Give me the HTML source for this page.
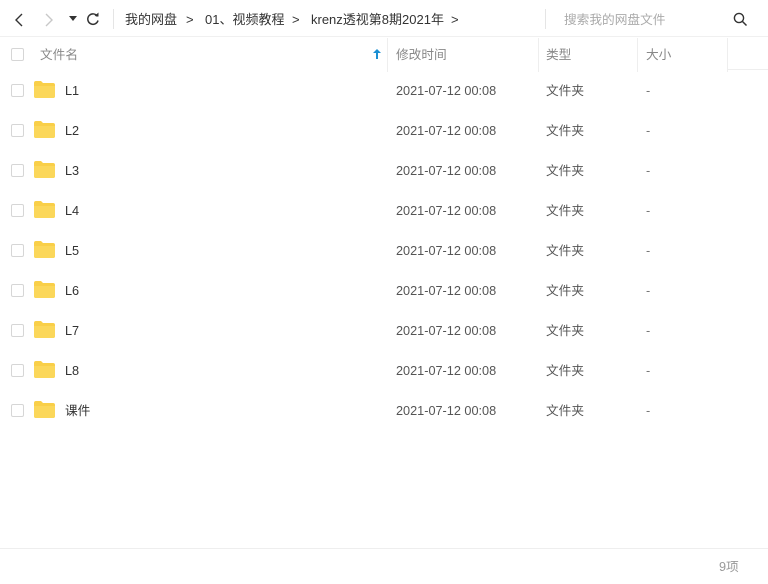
<!DOCTYPE html>
<html><head><meta charset="utf-8"><style>
*{margin:0;padding:0;box-sizing:border-box}
body{width:768px;height:584px;background:#fff;font-family:"Liberation Sans","Noto Sans CJK SC",sans-serif;position:relative;overflow:hidden;color:#333;font-size:12.7px;line-height:16px}
.a{position:absolute;white-space:nowrap;line-height:16px}
.cb{position:absolute;left:11px;width:13px;height:13px;border:1px solid #d6d6d6;border-radius:2px;background:#fff}
.sep{position:absolute;top:38px;width:1px;height:34px;background:#eee}
</style></head><body>
<svg class="a" style="left:12px;top:12px" width="14" height="16" viewBox="0 0 14 16"><path d="M10 2 L4 8 L10 14" fill="none" stroke="#333" stroke-width="1.4"/></svg>
<svg class="a" style="left:42px;top:12px" width="14" height="16" viewBox="0 0 14 16"><path d="M4 2 L10 8 L4 14" fill="none" stroke="#c8c8c8" stroke-width="1.4"/></svg>
<svg class="a" style="left:69px;top:16px" width="8" height="6"><path d="M0 0 L8 0 L4 5 Z" fill="#333"/></svg>
<svg class="a" style="left:85px;top:11px" width="16" height="16" viewBox="0 0 16 16"><path d="M12.5 5.5 A5.2 5.2 0 1 0 13 9.5" fill="none" stroke="#333" stroke-width="1.5"/><path d="M9.5 5 L13.5 5.5 L13.5 1.5 Z" fill="#333"/></svg>
<div class="a" style="left:113px;top:9px;width:1px;height:20px;background:#e5e5e5"></div>
<div class="a" style="left:125px;top:12px;font-size:13px">我的网盘</div>
<div class="a" style="left:186px;top:12px;font-size:13px">&gt;</div>
<div class="a" style="left:205px;top:12px;font-size:13px">01、视频教程</div>
<div class="a" style="left:292px;top:12px;font-size:13px">&gt;</div>
<div class="a" style="left:311px;top:12px;font-size:13px">krenz透视第8期2021年</div>
<div class="a" style="left:451px;top:12px;font-size:13px">&gt;</div>
<div class="a" style="left:545px;top:9px;width:1px;height:20px;background:#e5e5e5"></div>
<div class="a" style="left:564px;top:12px;color:#aaa">搜索我的网盘文件</div>
<svg class="a" style="left:733px;top:12px" width="15" height="15" viewBox="0 0 15 15"><circle cx="6" cy="6" r="4.6" fill="none" stroke="#333" stroke-width="1.4"/><path d="M9.5 9.5 L13.5 13.5" stroke="#333" stroke-width="1.5"/></svg>
<div class="a" style="left:0;top:36px;width:768px;height:1px;background:#f0f0f0"></div>
<div class="cb" style="top:48px"></div>
<div class="a" style="left:40px;top:47px;color:#888">文件名</div>
<svg class="a" style="left:373px;top:49px" width="8" height="10"><path d="M4 0 L8 4 L5 4 L5 10 L3 10 L3 4 L0 4 Z" fill="#1a8fd3"/></svg>
<div class="sep" style="left:387px"></div>
<div class="a" style="left:396px;top:47px;color:#888">修改时间</div>
<div class="sep" style="left:538px"></div>
<div class="a" style="left:546px;top:47px;color:#888">类型</div>
<div class="sep" style="left:637px"></div>
<div class="a" style="left:646px;top:47px;color:#888">大小</div>
<div class="sep" style="left:727px"></div>
<div class="a" style="left:727px;top:69px;width:41px;height:1px;background:#eee"></div>
<div id="rows"></div>
<script>
var n=["L1","L2","L3","L4","L5","L6","L7","L8","课件"],h="";
n.forEach(function(s,i){var y=90+i*40;
h+='<div class="cb" style="top:'+(y-6)+'px"></div>'+
'<svg class="a" style="left:34px;top:'+(y-9)+'px" width="21" height="17" viewBox="0 0 21 17"><path d="M0 2 Q0 0 2 0 L7 0 L9 2 L19 2 Q21 2 21 4 L21 15 Q21 17 19 17 L2 17 Q0 17 0 15 Z" fill="#f9cf48"/><path d="M0 5 L21 5 L21 15 Q21 17 19 17 L2 17 Q0 17 0 15 Z" fill="#fbd75a"/></svg>'+
'<div class="a" style="left:65px;top:'+(y-7)+'px;font-size:12.7px">'+s+'</div>'+
'<div class="a" style="left:396px;top:'+(y-7)+'px;color:#555">2021-07-12 00:08</div>'+
'<div class="a" style="left:546px;top:'+(y-7)+'px;color:#555">文件夹</div>'+
'<div class="a" style="left:646px;top:'+(y-7)+'px;color:#777">-</div>';});
document.getElementById("rows").outerHTML=h;
</script>
<div class="a" style="left:0;top:548px;width:768px;height:1px;background:#eee"></div>
<div class="a" style="left:719px;top:559px;color:#999">9项</div>
</body></html>
